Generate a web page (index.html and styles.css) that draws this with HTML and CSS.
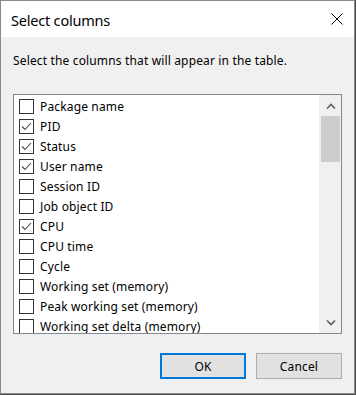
FILE: index.html
```html
<!DOCTYPE html>
<html lang="en">
<head>
    <meta charset="UTF-8">
    <meta name="viewport" content="width=device-width, initial-scale=1.0">
    <title>Select columns</title>
    <link rel="stylesheet" href="styles.css">
</head>
<body>
    <div class="dialog">
        <div class="titlebar">
            <span class="title">Select columns</span>
            <button class="close" aria-label="Close">
                <svg width="12" height="12" viewBox="0 0 12 12">
                    <path d="M0.5 0.5 L11.5 11.5 M11.5 0.5 L0.5 11.5" stroke="#000" stroke-width="1" fill="none"/>
                </svg>
            </button>
        </div>
        <div class="content">
            <p class="hint">Select the columns that will appear in the table.</p>
            <div class="listbox">
                <ul class="items" id="column-list"></ul>
                <div class="scrollbar">
                    <div class="arrow">
                        <svg width="10" height="6" viewBox="0 0 10 6"><path d="M1 5.5 L5 1.5 L9 5.5" stroke="#606060" stroke-width="1.6" fill="none"/></svg>
                    </div>
                    <div class="track"><div class="thumb"></div></div>
                    <div class="arrow down">
                        <svg width="10" height="6" viewBox="0 0 10 6"><path d="M1 0.5 L5 4.5 L9 0.5" stroke="#606060" stroke-width="1.6" fill="none"/></svg>
                    </div>
                </div>
            </div>
            <div class="actions">
                <button class="btn default">OK</button>
                <button class="btn">Cancel</button>
            </div>
        </div>
    </div>
    <script>
        const columns = [
            ["Package name", false],
            ["PID", true],
            ["Status", true],
            ["User name", true],
            ["Session ID", false],
            ["Job object ID", false],
            ["CPU", true],
            ["CPU time", false],
            ["Cycle", false],
            ["Working set (memory)", false],
            ["Peak working set (memory)", false],
            ["Working set delta (memory)", false]
        ];

        const list = document.getElementById("column-list");
        const check = '<svg width="13" height="13" viewBox="0 0 13 13"><path d="M2 6.5 L5 9.5 L11 3" stroke="#4a4a4a" stroke-width="1.1" fill="none"/></svg>';

        columns.forEach(([name, on]) => {
            const li = document.createElement("li");
            li.className = "item";
            li.innerHTML = `<span class="box">${on ? check : ""}</span><span class="label">${name}</span>`;
            list.appendChild(li);
        });
    </script>
</body>
</html>
```

FILE: styles.css
```css
body {
    margin: 0;
    background: #4a4a4a;
    font-family: "Noto Sans", "Liberation Sans", sans-serif;
    font-size: 12px;
    letter-spacing: 0.15px;
    color: #000;
}

.dialog {
    width: 355px;
    height: 394px;
    box-sizing: border-box;
    border: 1px solid #8a8a8a;
    background: #f0f0f0;
}

.titlebar {
    height: 36px;
    background: #fff;
    display: flex;
    align-items: center;
    justify-content: space-between;
    padding-left: 10px;
}

.title {
    font-size: 14.5px;
    letter-spacing: -0.2px;
    margin-top: 1px;
}

.close {
    border: none;
    background: none;
    padding: 0;
    width: 46px;
    height: 36px;
    display: flex;
    align-items: center;
    justify-content: center;
    margin-right: -6px;
}

.content {
    padding: 0 12px;
}

.hint {
    margin: 16px 0 25px;
    line-height: 16px;
}

.listbox {
    height: 240px;
    box-sizing: border-box;
    border: 1px solid #828790;
    background: #fff;
    display: flex;
}

.items {
    flex: 1;
    list-style: none;
    margin: 0;
    padding: 2px 0 0 5px;
    overflow: hidden;
}

.item {
    height: 20px;
    display: flex;
    align-items: flex-start;
    white-space: nowrap;
}

.box {
    width: 15px;
    height: 15px;
    box-sizing: border-box;
    border: 1px solid #333;
    margin-top: 2px;
    display: flex;
    align-items: center;
    justify-content: center;
}

.label {
    margin-left: 6px;
    line-height: 19px;
}

.scrollbar {
    width: 21px;
    background: #f0f0f0;
    border-left: 1px solid #eef2f8;
    display: flex;
    flex-direction: column;
}

.arrow {
    height: 21px;
    display: flex;
    align-items: center;
    justify-content: center;
}

.track {
    flex: 1;
    padding: 0 1px;
}

.thumb {
    height: 46px;
    background: #cdcdcd;
}

.actions {
    display: flex;
    justify-content: flex-end;
    gap: 10px;
    margin-top: 19px;
}

.btn {
    width: 86px;
    height: 26px;
    box-sizing: border-box;
    border: 1px solid #adadad;
    background: #e1e1e1;
    font-family: inherit;
    font-size: 12px;
    letter-spacing: 0.15px;
    color: #000;
    padding: 0;
}

.btn.default {
    border: 2px solid #0078d7;
}
```
